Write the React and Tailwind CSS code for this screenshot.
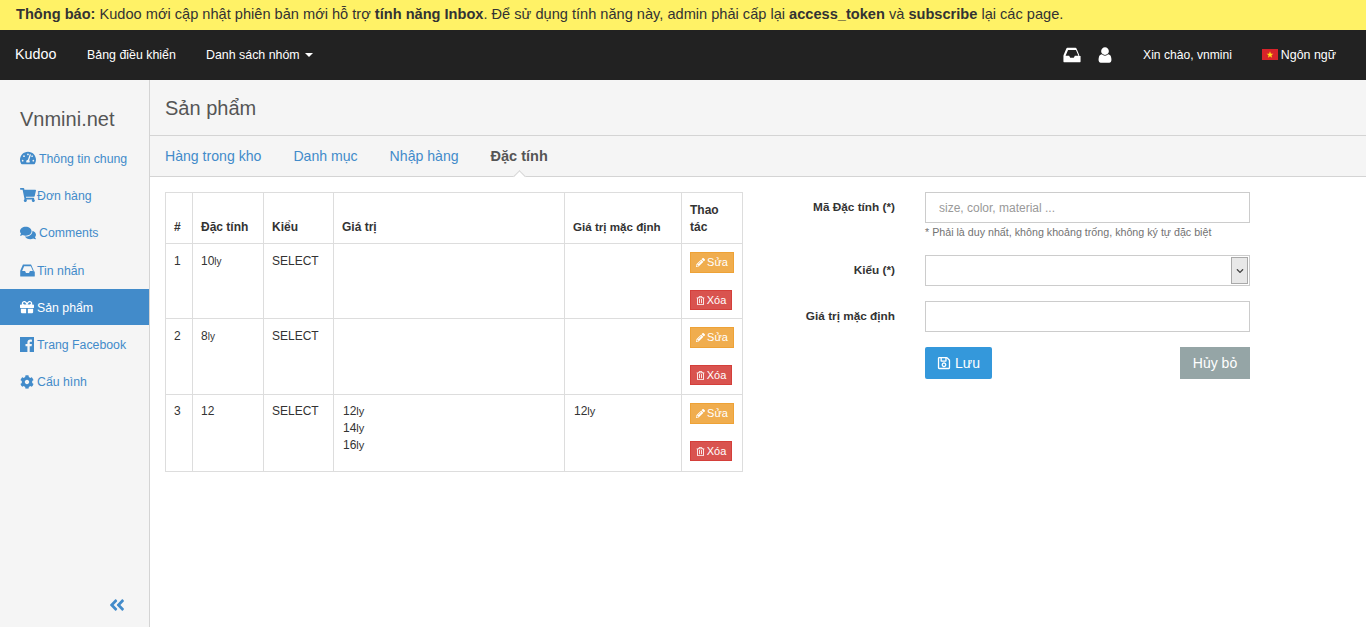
import {
  FaTachometerAlt,
  FaShoppingCart,
  FaComments,
  FaGift,
  FaCog,
  FaPencilAlt,
  FaRegTrashAlt,
  FaRegSave,
  FaAngleDoubleLeft,
  FaChevronDown,
} from "react-icons/fa";

const InboxIcon = ({ className }) => (
  <svg viewBox="0 0 1792 1792" fill="currentColor" className={className}>
    <path d="M1151 960h316q-1-3-2.5-8.5t-2.5-7.5l-212-496h-708l-212 496q-1 3-2.5 8.5t-2.5 7.5h316l95 192h320zm513 30v482q0 26-19 45t-45 19h-1408q-26 0-45-19t-19-45v-482q0-62 25-123l238-552q10-25 36.5-42t52.5-17h728q26 0 52.5 17t36.5 42l238 552q25 61 25 123z" />
  </svg>
);

const UserIcon = ({ className }) => (
  <svg viewBox="0 0 1792 1792" fill="currentColor" className={className}>
    <path d="M1536 1399q0 109-62.5 187t-150.5 78h-854q-88 0-150.5-78t-62.5-187q0-85 8.5-160.5t31.5-152 58.5-131 94-89 134.5-34.5q131 128 313 128t313-128q76 0 134.5 34.5t94 89 58.5 131 31.5 152 8.5 160.5zm-256-887q0 159-112.5 271.5t-271.5 112.5-271.5-112.5-112.5-271.5 112.5-271.5 271.5-112.5 271.5 112.5 112.5 271.5z" />
  </svg>
);

const FacebookIcon = ({ className }) => (
  <svg viewBox="0 0 14 15" className={className}>
    <rect width="14" height="15" fill="currentColor" />
    <path
      d="M9.7 15V9.3h1.9l.3-2.2H9.7V5.7c0-.65.2-1.05 1.1-1.05h1.15V2.7c-.2 0-.9-.1-1.7-.1-1.7 0-2.85 1-2.85 2.9v1.6H5.5v2.2h1.9V15z"
      fill="#f5f5f5"
    />
  </svg>
);

const menu = [
  { label: "Thông tin chung", Icon: FaTachometerAlt, cls: "text-[16px]", gap: "gap-[3px]", text: "mt-[2px]" },
  { label: "Đơn hàng", Icon: FaShoppingCart, cls: "text-[16px]", gap: "gap-[1px]", text: "mt-[2px]" },
  { label: "Comments", Icon: FaComments, cls: "text-[16px]", gap: "gap-[3px]", text: "" },
  { label: "Tin nhắn", Icon: InboxIcon, cls: "w-[17px] h-[17px] -ml-[1px]", gap: "gap-[1px]", text: "mt-[2px]" },
  { label: "Sản phẩm", Icon: FaGift, cls: "text-[16px] w-[14px]", gap: "gap-[3px]", text: "mt-[2px]" },
  { label: "Trang Facebook", Icon: FacebookIcon, cls: "w-[14px] h-[15px]", gap: "gap-[3px]", text: "mt-[2px]" },
  { label: "Cấu hình", Icon: FaCog, cls: "text-[16px] w-[14px]", gap: "gap-[3px]", text: "" },
];

const rows = [
  { id: 1, name: "10", unit: "ly", values: [], def: "", h: "h-[75px]", pt: "pt-[9px]" },
  { id: 2, name: "8", unit: "ly", values: [], def: "", h: "h-[76px]", pt: "pt-[9px]" },
  { id: 3, name: "12", unit: "", values: ["12", "14", "16"], def: "12", h: "h-[77px]", pt: "pt-[8px]" },
];

const Flag = () => (
  <svg width="16" height="11" viewBox="0 0 16 11" className="shrink-0">
    <rect width="16" height="11" fill="#d8232a" />
    <polygon
      points="8,2.2 8.9,4.7 11.4,4.7 9.4,6.2 10.1,8.7 8,7.2 5.9,8.7 6.6,6.2 4.6,4.7 7.1,4.7"
      fill="#ffe01a"
    />
  </svg>
);

const Sidebar = () => (
  <aside className="w-[150px] shrink-0 bg-[#f5f5f5] border-r border-[#d4d4d4] flex flex-col">
    <div className="pl-[20px] pt-[26px] h-[60px] text-[20px] leading-[26px] text-[#555]">
      Vnmini.net
    </div>
    <nav className="flex flex-col gap-px">
      {menu.map(({ label, Icon, cls, gap, text }) => (
        <div
          key={label}
          className={`h-[36.3px] pl-[20px] flex items-center text-[12.3px] ${gap} ${
            label === "Sản phẩm" ? "bg-[#428bca] text-white" : "text-[#428bca]"
          }`}
        >
          <Icon className={`shrink-0 ${cls}`} />
          <span className={text}>{label}</span>
        </div>
      ))}
    </nav>
    <div className="mt-auto pb-[13px] pr-[23px] flex justify-end text-[#428bca]">
      <FaAngleDoubleLeft className="text-[18px]" />
    </div>
  </aside>
);

const cell = "border border-[#ddd] px-[8px] align-top leading-[17px]";

const AttrTable = () => (
  <table className="w-[577px] border-collapse table-fixed text-[12px] text-[#333] shrink-0 self-start">
    <colgroup>
      <col className="w-[27px]" />
      <col className="w-[71px]" />
      <col className="w-[70px]" />
      <col className="w-[231px]" />
      <col className="w-[117px]" />
      <col className="w-[61px]" />
    </colgroup>
    <thead>
      <tr className="h-[51px]">
        {["#", "Đặc tính", "Kiểu", "Giá trị", "Giá trị mặc định", "Thao tác"].map((h) => (
          <th
            key={h}
            className={`border border-[#ddd] px-[8px] align-bottom text-left font-bold leading-[17px] ${
              h === "Giá trị mặc định" ? "text-[11.6px] pb-[8px]" : "pb-[7px]"
            }`}
          >
            {h}
          </th>
        ))}
      </tr>
    </thead>
    <tbody>
      {rows.map((r) => (
        <tr key={r.id} className={r.h}>
          <td className={`${cell} ${r.pt}`}>{r.id}</td>
          <td className={`${cell} ${r.pt}`}>
            {r.name}
            <span className="text-[10px]">{r.unit}</span>
          </td>
          <td className={`${cell} ${r.pt}`}>SELECT</td>
          <td className={`${cell} ${r.pt} pl-[9px]`}>
            {r.values.map((v) => (
              <div key={v}>
                {v}
                <span className="text-[11px]">ly</span>
              </div>
            ))}
          </td>
          <td className={`${cell} ${r.pt} pl-[9px]`}>
            {r.def && (
              <>
                {r.def}
                <span className="text-[11px]">ly</span>
              </>
            )}
          </td>
          <td className="border border-[#ddd] px-[8px] pt-[8px] align-top">
            <div className="flex flex-col items-start gap-[17px]">
              <button className="h-[21px] w-[44px] bg-[#f0ad4e] border border-[#eea236] text-white text-[11px] flex items-center justify-center gap-[2px]">
                <FaPencilAlt className="text-[9px]" />
                Sửa
              </button>
              <button className="h-[20px] w-[42px] bg-[#d9534f] border border-[#d43f3a] text-white text-[11px] flex items-center justify-center gap-[2px]">
                <FaRegTrashAlt className="text-[9px]" />
                Xóa
              </button>
            </div>
          </td>
        </tr>
      ))}
    </tbody>
  </table>
);

const labelCls = "w-[152px] shrink-0 pt-[7px] text-right font-bold text-[11.8px]";

const AttrForm = () => (
  <form className="w-[507px] shrink-0 text-[12px] text-[#333]">
    <div className="flex">
      <label className={labelCls}>Mã Đặc tính (*)</label>
      <div className="ml-[30px] w-[325px]">
        <input
          type="text"
          placeholder="size, color, material ..."
          className="w-full h-[31px] px-[13px] border border-[#ccc] outline-none placeholder:text-[#999]"
        />
        <p className="mt-[2px] text-[10.7px] leading-[15px] text-[#737373]">
          * Phải là duy nhất, không khoảng trống, không ký tự đặc biệt
        </p>
      </div>
    </div>
    <div className="flex mt-[15px]">
      <label className={labelCls}>Kiểu (*)</label>
      <div className="ml-[30px] w-[325px] h-[31px] border border-[#ccc] flex justify-end">
        <span className="w-[17px] h-[27px] m-px bg-[#e8e8e8] border border-[#a9a9a9] flex items-center justify-center text-[#444]">
          <FaChevronDown className="text-[8px]" />
        </span>
      </div>
    </div>
    <div className="flex mt-[15px]">
      <label className={labelCls}>Giá trị mặc định</label>
      <input
        type="text"
        className="ml-[30px] w-[325px] h-[31px] border border-[#ccc] outline-none"
      />
    </div>
    <div className="flex justify-between ml-[182px] w-[325px] mt-[15px]">
      <button
        type="button"
        className="w-[67px] h-[32px] rounded-[2px] bg-[#3498db] text-white text-[14px] flex items-center justify-center gap-[4px]"
      >
        <FaRegSave className="text-[14px]" />
        Lưu
      </button>
      <button
        type="button"
        className="w-[70px] h-[32px] bg-[#95a5a6] text-white text-[14px]"
      >
        Hủy bỏ
      </button>
    </div>
  </form>
);

export default function App() {
  return (
    <div className="h-screen flex flex-col overflow-hidden bg-white font-['Liberation_Sans',Arial,sans-serif]">
      <div className="h-[30px] shrink-0 bg-[#fff266] pl-[16px] flex items-center text-[14.6px] text-[#333]">
        <p>
          <b>Thông báo:</b> Kudoo mới cập nhật phiên bản mới hỗ trợ <b>tính năng Inbox</b>. Để sử
          dụng tính năng này, admin phải cấp lại <b>access_token</b> và <b>subscribe</b> lại các
          page.
        </p>
      </div>

      <header className="h-[50px] shrink-0 bg-[#222] text-white flex items-center text-[12.4px] pl-[15px]">
        <span className="text-[14.3px] w-[72px]">Kudoo</span>
        <span className="w-[119px]">Bảng điều khiển</span>
        <span className="flex items-center gap-[5px]">
          Danh sách nhóm
          <span className="w-0 h-0 border-x-[4px] border-x-transparent border-t-[4px] border-t-white" />
        </span>
        <div className="ml-auto flex items-center pr-[30px]">
          <InboxIcon className="w-[20px] h-[20px]" />
          <UserIcon className="w-[18px] h-[18px] ml-[14px]" />
          <span className="ml-[29px] text-[12.1px]">Xin chào, vnmini</span>
          <span className="ml-[30px] flex items-center gap-[3px]">
            <Flag />
            Ngôn ngữ
          </span>
        </div>
      </header>

      <div className="flex flex-1 min-h-0">
        <Sidebar />
        <main className="flex-1 min-w-0 flex flex-col">
          <div className="h-[56px] shrink-0 bg-[#f5f5f5] border-b border-[#d4d4d4] pl-[15px] pt-[15px] text-[20px] leading-[26px] text-[#555]">
            Sản phẩm
          </div>
          <div className="relative h-[41px] shrink-0 bg-[#f5f5f5] border-b border-[#d4d4d4] flex items-center pl-[15px] pt-[2px] gap-[32px] text-[14.1px] text-[#428bca]">
            <span>Hàng trong kho</span>
            <span>Danh mục</span>
            <span>Nhập hàng</span>
            <span className="font-bold text-[14.5px] text-[#555]">Đặc tính</span>
            <span className="absolute left-[365px] -bottom-[5px] w-[9px] h-[9px] bg-white border-l border-t border-[#d4d4d4] rotate-45" />
          </div>
          <div className="flex-1 flex items-start pl-[15px] pt-[15px]">
            <AttrTable />
            <AttrForm />
          </div>
        </main>
      </div>
    </div>
  );
}
